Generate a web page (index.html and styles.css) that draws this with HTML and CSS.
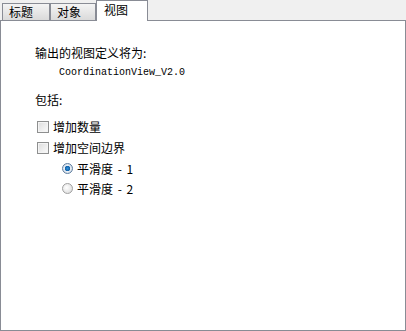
FILE: index.html
```html
<!DOCTYPE html>
<html lang="zh-CN">
  <head>
    <meta charset="UTF-8" />
    <title>视图</title>
    <link rel="stylesheet" href="styles.css">
  </head>
  <body>
    <div class="tabs">
      <div class="tab">标题</div>
      <div class="tab">对象</div>
      <div class="tab active">视图</div>
    </div>
    <div class="panel">
      <p class="label">输出的视图定义将为:</p>
      <p class="view-name">CoordinationView_V2.0</p>
      <p class="label include">包括:</p>
      <div class="options">
        <label class="check-row"><span class="checkbox"></span>增加数量</label>
        <label class="check-row"><span class="checkbox"></span>增加空间边界</label>
        <div class="radios">
          <label class="radio-row"><span class="radio checked"></span>平滑度 - 1</label>
          <label class="radio-row"><span class="radio"></span>平滑度 - 2</label>
        </div>
      </div>
    </div>
  </body>
</html>
```

FILE: styles.css
```css
* {
  margin: 0;
  padding: 0;
  box-sizing: border-box;
}

body {
  width: 406px;
  height: 331px;
  background-color: #f0f0f0;
  font-family: "Noto Sans CJK SC", "DejaVu Sans", sans-serif;
  font-size: 12px;
  color: #000;
  overflow: hidden;
}

/* Tabs */

.tabs {
  display: flex;
  align-items: flex-end;
  height: 20px;
  padding-left: 2px;
}

.tab {
  height: 17px;
  border: 1px solid #898c95;
  border-bottom: none;
  background: linear-gradient(#f4f4f4, #dadada);
  line-height: 15px;
  padding-left: 6px;
  width: 48px;
}

.tab + .tab {
  width: 46px;
  padding-left: 6px;
}

.tab.active {
  position: relative;
  height: 21px;
  width: 52px;
  margin-bottom: -1px;
  background: #fff;
  padding-left: 7px;
  line-height: 17px;
}

/* Panel */

.panel {
  height: 311px;
  border: 1px solid #898c95;
  background-color: #fff;
  padding: 24px 0 0 34px;
}

.label {
  line-height: 16px;
}

.view-name {
  font-family: "Liberation Mono", monospace;
  font-size: 10px;
  line-height: 14px;
  margin: 5px 0 0 24px;
}

.include {
  margin-top: 12px;
}

.options {
  display: flex;
  flex-direction: column;
  margin-top: 8px;
}

.check-row,
.radio-row {
  display: flex;
  align-items: center;
  gap: 4px;
  height: 21px;
}

.checkbox {
  width: 12px;
  height: 12px;
  margin-left: 2px;
  border: 1px solid #8e8f8f;
  background: linear-gradient(135deg, #dcdcdc, #fbfbfb);
  box-shadow: inset 0 0 0 1px #f4f4f4;
}

.radios {
  padding-left: 27px;
}

.radio-row {
  height: 20px;
  word-spacing: 2px;
}

.radio {
  width: 11px;
  height: 11px;
  border-radius: 50%;
  border: 1px solid #a0a0a0;
  background: radial-gradient(circle at 40% 40%, #fff, #d6d6d6);
}

.radio.checked {
  border-color: #5f7e9f;
  background: radial-gradient(circle, #2d8fd8 0, #1060a8 2.5px, #e8eef5 3px, #c8d4e0 5.5px);
}
```
